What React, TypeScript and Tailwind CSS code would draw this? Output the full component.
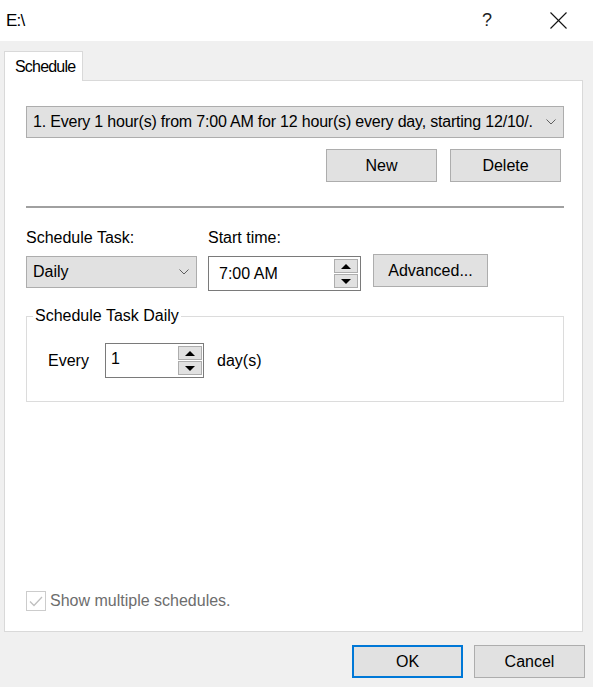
import React from "react";

const font = { fontFamily: '"Liberation Sans", Arial, sans-serif' };

function Chevron() {
  return (
    <svg width="10" height="6" viewBox="0 0 10 6" className="shrink-0">
      <polyline points="0.5,0.5 5,5 9.5,0.5" fill="none" stroke="#5f5f5f" strokeWidth="1" />
    </svg>
  );
}

function Spin() {
  return (
    <div className="flex flex-col gap-[1px]">
      <div className="w-[24px] h-[14px] bg-[#e1e1e1] border border-[#adadad] flex items-center justify-center">
        <svg width="10" height="5" viewBox="0 0 10 5">
          <polygon points="0,5 10,5 5,0" fill="#000" />
        </svg>
      </div>
      <div className="w-[24px] h-[14px] bg-[#e1e1e1] border border-[#adadad] flex items-center justify-center">
        <svg width="10" height="5" viewBox="0 0 10 5">
          <polygon points="0,0 10,0 5,5" fill="#000" />
        </svg>
      </div>
    </div>
  );
}

function Btn({ label, w, primary }: { label: string; w: string; primary?: boolean }) {
  return (
    <div
      className={`${w} h-[33px] bg-[#e1e1e1] flex items-center justify-center text-[16px] text-black ${
        primary ? "border-2 border-[#0078d7]" : "border border-[#adadad]"
      }`}
    >
      {label}
    </div>
  );
}

export default function App() {
  return (
    <div style={font} className="w-[593px] h-[687px] bg-[#f0f0f0] flex flex-col text-black overflow-hidden">
      {/* Title bar */}
      <div className="h-[41px] bg-white flex items-center shrink-0">
        <span className="ml-[6px] text-[17px] tracking-[-0.8px]">E:\</span>
        <span className="ml-auto text-[18px] font-light text-[#222]">?</span>
        <svg width="17" height="17" viewBox="0 0 17 17" className="ml-[58px] mr-[26px]">
          <line x1="0.5" y1="0.5" x2="16.5" y2="16.5" stroke="#111" strokeWidth="1.1" />
          <line x1="16.5" y1="0.5" x2="0.5" y2="16.5" stroke="#111" strokeWidth="1.1" />
        </svg>
      </div>

      {/* Tab */}
      <div className="mt-[10px] ml-[4px] flex shrink-0">
        <div className="w-[79px] h-[30px] bg-white border border-b-0 border-[#d9d9d9] flex items-center pl-[10px] text-[16px] tracking-[-0.8px] relative z-10 -mb-[1px]">
          Schedule
        </div>
      </div>

      {/* Panel */}
      <div className="ml-[4px] mr-[10px] h-[552px] bg-white border border-[#d9d9d9] flex flex-col pl-[21px] pr-[18px] pt-[25px] pb-[18px] text-[16px] shrink-0">
        {/* schedule dropdown */}
        <div className="h-[32px] bg-[#e1e1e1] border border-[#adadad] flex items-center pl-[6px] pr-[7px]">
          <span className="flex-1 whitespace-nowrap overflow-hidden tracking-[-0.2px]">
            1. Every 1 hour(s) from 7:00 AM for 12 hour(s) every day, starting 12/10/.
          </span>
          <span className="ml-[4px]">
            <Chevron />
          </span>
        </div>

        <div className="mt-[11px] flex justify-end gap-[13px] pr-[3px]">
          <Btn label="New" w="w-[111px]" />
          <Btn label="Delete" w="w-[111px]" />
        </div>

        <div className="mt-[24px] h-[2px] bg-[#a0a0a0]" />

        {/* Schedule task row */}
        <div className="mt-[21px] flex items-start">
          <div className="w-[171px] flex flex-col">
            <div className="h-[18px] leading-[18px]">Schedule Task:</div>
            <div className="mt-[9px] h-[32px] bg-[#e1e1e1] border border-[#adadad] flex items-center pl-[6px] pr-[7px]">
              <span className="flex-1">Daily</span>
              <Chevron />
            </div>
          </div>
          <div className="ml-[11px] w-[153px] flex flex-col">
            <div className="h-[18px] leading-[18px]">Start time:</div>
            <div className="mt-[9px] h-[35px] bg-white border border-[#7a7a7a] flex items-center pl-[10px] pr-[2px]">
              <span className="flex-1">7:00 AM</span>
              <Spin />
            </div>
          </div>
          <div className="ml-[12px] mt-[25px]">
            <Btn label="Advanced..." w="w-[115px]" />
          </div>
        </div>

        {/* Group box */}
        <div className="mt-[25px] h-[86px] border border-[#dcdcdc] relative">
          <div className="absolute -top-[10px] left-[6px] bg-white px-[2px] leading-[18px]">Schedule Task Daily</div>
          <div className="mt-[26px] flex items-center">
            <span className="ml-[21px] w-[57px]">Every</span>
            <div className="w-[99px] h-[35px] bg-white border border-[#7a7a7a] flex items-center pl-[5px] pr-[1px]">
              <span className="flex-1 self-start mt-[3px]">1</span>
              <Spin />
            </div>
            <span className="ml-[13px]">day(s)</span>
          </div>
        </div>

        {/* Checkbox */}
        <div className="mt-auto flex items-center">
          <div className="w-[20px] h-[20px] border border-[#cccccc] flex items-center justify-center">
            <svg width="14" height="11" viewBox="0 0 14 11">
              <polyline points="1,5.5 5,9.5 13,1" fill="none" stroke="#bfbfbf" strokeWidth="1.3" />
            </svg>
          </div>
          <span className="ml-[4px] text-[#6d6d6d]">Show multiple schedules.</span>
        </div>
      </div>

      {/* Bottom buttons */}
      <div className="mt-[13px] flex justify-end gap-[11px] pr-[8px]">
        <Btn label="OK" w="w-[111px]" primary />
        <Btn label="Cancel" w="w-[111px]" />
      </div>
    </div>
  );
}
